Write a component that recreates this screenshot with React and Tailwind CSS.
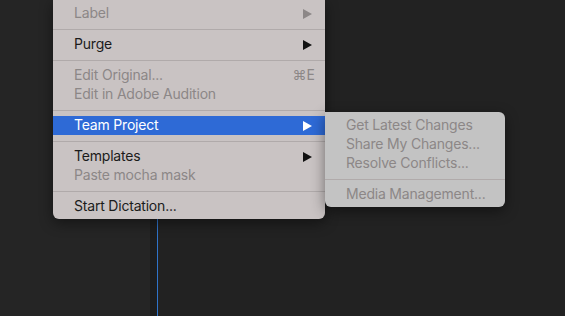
import React from 'react';

const Arrow = ({ color }) => (
    <svg width="9" height="10" viewBox="0 0 9 10" className="shrink-0">
        <polygon points="0,0 9,5 0,10" fill={color} />
    </svg>
);

const Sep = () => (
    <div className="h-[12px] flex items-center">
        <div className="w-full h-px bg-[#b0aaaa]" />
    </div>
);

const Row = ({ label, disabled, arrow, shortcut, active }) => (
    <div
        className={
            'h-[19px] flex items-center justify-between pl-[21px] pr-[13px] ' +
            (active ? 'bg-[#2e6ad6] text-white' : disabled ? 'text-[#8c8787]' : 'text-[#1b1b1b]')
        }
    >
        <span className="pb-[2px] tracking-[-0.2px]">{label}</span>
        {arrow && <Arrow color={active ? '#ffffff' : disabled ? '#8c8787' : '#111111'} />}
        {shortcut && <span className="pb-[2px] -mr-[3px]">{shortcut}</span>}
    </div>
);

export default function App() {
    return (
        <div
            className="relative w-[565px] h-[316px] overflow-hidden bg-[#222222] flex"
            style={{ fontFamily: 'Inter, "Liberation Sans", sans-serif' }}
        >
            {/* background panels */}
            <div className="w-[150px] h-full bg-[#252525]" />
            <div className="w-[7px] h-full bg-[#1d1d1d]" />
            <div className="w-px h-full bg-[#2f73c9]" />
            <div className="flex-1 h-full bg-[#222222]" />

            {/* main context menu */}
            <div className="absolute left-[53px] top-0 w-[272px] pt-[4px] pb-[3px] bg-[#c9c3c3] rounded-b-[6px] shadow-[0_4px_14px_rgba(0,0,0,0.45)] text-[14px] leading-[19px]">
                <Row label="Label" disabled arrow />
                <Sep />
                <Row label="Purge" arrow />
                <Sep />
                <Row label="Edit Original..." disabled shortcut="⌘E" />
                <Row label="Edit in Adobe Audition" disabled />
                <Sep />
                <Row label="Team Project" arrow active />
                <Sep />
                <Row label="Templates" arrow />
                <Row label="Paste mocha mask" disabled />
                <Sep />
                <Row label="Start Dictation..." />
            </div>

            {/* submenu */}
            <div className="absolute left-[325px] top-[112px] w-[180px] pt-[4px] pb-[3px] bg-[#c3c3c3] rounded-[6px] rounded-tl-none shadow-[0_4px_14px_rgba(0,0,0,0.45)] text-[14px] leading-[19px]">
                <Row label="Get Latest Changes" disabled />
                <Row label="Share My Changes..." disabled />
                <Row label="Resolve Conflicts..." disabled />
                <Sep />
                <Row label="Media Management..." disabled />
            </div>
        </div>
    );
}
